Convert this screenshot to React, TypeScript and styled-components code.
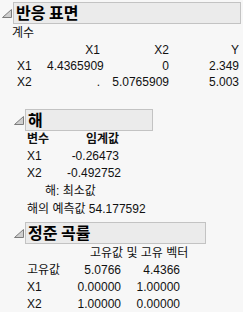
import React from "react";
import styled, { createGlobalStyle } from "styled-components";

const Global = createGlobalStyle`
  html, body { margin: 0; padding: 0; background: #f7f7f7; }
  body {
    font-family: "Liberation Sans", "Noto Sans CJK KR", sans-serif;
    font-size: 12px;
    color: #111;
  }
`;

const Page = styled.div`
  width: 243px;
  height: 312px;
  overflow: hidden;
  padding-top: 2px;
  box-sizing: border-box;
`;

const Outline = styled.section<{ $gap?: number }>`
  display: flex;
  flex-direction: column;
  margin-top: ${(p) => p.$gap ?? 0}px;
`;

const OutlineHeader = styled.div<{ $x: number }>`
  display: flex;
  align-items: flex-start;
  padding-left: ${(p) => p.$x}px;
`;

const TriangleWrap = styled.span`
  display: block;
  width: 11px;
  height: 9px;
  margin-top: 5px;
  flex: none;
`;

const TitleBox = styled.div<{ $w: number }>`
  width: ${(p) => p.$w}px;
  height: 22px;
  box-sizing: border-box;
  border: 1px solid #c3c3c3;
  background: #ebebeb;
  padding-left: 2px;
  font-family: "Noto Sans CJK KR", sans-serif;
  font-weight: 700;
  font-size: 16px;
  line-height: 19px;
  color: #000;
`;

const Body = styled.div<{ $x: number }>`
  padding-left: ${(p) => p.$x}px;
  display: flex;
  flex-direction: column;
`;

const Caption = styled.div<{ $x?: number }>`
  height: 18px;
  line-height: 18px;
  padding-left: ${(p) => p.$x ?? 0}px;
  font-size: 12px;
`;

const Grid = styled.div<{ $cols: string; $x: number; $row: number }>`
  display: grid;
  grid-template-columns: ${(p) => p.$cols};
  grid-auto-rows: ${(p) => p.$row}px;
  margin-left: ${(p) => p.$x}px;
  line-height: ${(p) => p.$row}px;
`;

const Cell = styled.div<{ $align?: "left" | "right"; $bold?: boolean }>`
  text-align: ${(p) => p.$align ?? "right"};
  font-weight: ${(p) => (p.$bold ? 700 : 400)};
  white-space: nowrap;
`;

const Triangle = () => (
  <TriangleWrap>
    <svg width="10" height="9" viewBox="0 0 10 9">
      <polygon points="9.5,0.5 9.5,8.5 0.5,8.5" fill="#cfcfcf" stroke="#7c7c7c" strokeWidth="1" />
    </svg>
  </TriangleWrap>
);

export default function App() {
  return (
    <>
      <Global />
      <Page>
        <Outline>
          <OutlineHeader $x={2}>
            <Triangle />
            <TitleBox $w={228}>반응 표면</TitleBox>
          </OutlineHeader>
          <Body $x={12}>
            <Caption>계수</Caption>
            <Grid $cols="30px 53px 69px 70px" $x={5} $row={16}>
              <Cell />
              <Cell>X1</Cell>
              <Cell>X2</Cell>
              <Cell>Y</Cell>
              <Cell $align="left">X1</Cell>
              <Cell>4.4365909</Cell>
              <Cell>0</Cell>
              <Cell>2.349</Cell>
              <Cell $align="left">X2</Cell>
              <Cell>.</Cell>
              <Cell>5.0765909</Cell>
              <Cell>5.003</Cell>
            </Grid>

            <Outline $gap={19}>
              <OutlineHeader $x={2}>
                <Triangle />
                <TitleBox $w={128}>해</TitleBox>
              </OutlineHeader>
              <Body $x={15}>
                <Grid $cols="40px 52px" $x={0} $row={17}>
                  <Cell $align="left" $bold>변수</Cell>
                  <Cell $bold>임계값</Cell>
                  <Cell $align="left">X1</Cell>
                  <Cell>-0.26473</Cell>
                  <Cell $align="left">X2</Cell>
                  <Cell>-0.492752</Cell>
                </Grid>
                <Caption $x={18}>해: 최소값</Caption>
                <Caption $x={-3}>해의 예측값 54.177592</Caption>
              </Body>
            </Outline>

            <Outline $gap={4}>
              <OutlineHeader $x={2}>
                <Triangle />
                <TitleBox $w={181}>정준 곡률</TitleBox>
              </OutlineHeader>
              <Body $x={15}>
                <Caption $x={63}>고유값 및 고유 벡터</Caption>
                <Grid $cols="36px 58px 59px" $x={0} $row={17}>
                  <Cell $align="left">고유값</Cell>
                  <Cell>5.0766</Cell>
                  <Cell>4.4366</Cell>
                  <Cell $align="left">X1</Cell>
                  <Cell>0.00000</Cell>
                  <Cell>1.00000</Cell>
                  <Cell $align="left">X2</Cell>
                  <Cell>1.00000</Cell>
                  <Cell>0.00000</Cell>
                </Grid>
              </Body>
            </Outline>
          </Body>
        </Outline>
      </Page>
    </>
  );
}
